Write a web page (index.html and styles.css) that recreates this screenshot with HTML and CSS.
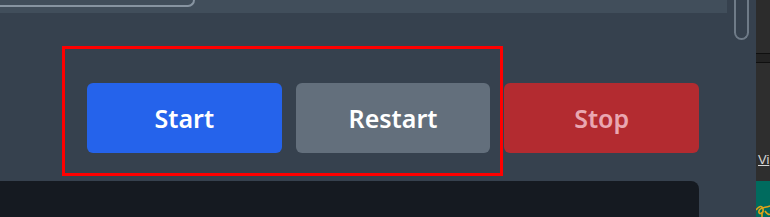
FILE: index.html
```html
<!DOCTYPE html>
<html lang="en">
<head>
    <meta charset="UTF-8">
    <meta name="viewport" content="width=device-width, initial-scale=1.0">
    <title>Controls</title>

    <link rel="stylesheet" href="styles.css">
</head>
<body>
    <div class="page">
        <div class="main">
            <div class="topbar">
                <div class="field"></div>
            </div>
            <div class="scroller"></div>

            <div class="controls">
                <button type="button" class="btn start">Start</button>
                <button type="button" class="btn restart">Restart</button>
                <button type="button" class="btn stop" disabled>Stop</button>
            </div>
            <!-- highlight round start / restart -->
            <div class="highlight"></div>

            <div class="console"></div>
        </div>

        <div class="side">
            <div class="side-top"></div>
            <div class="side-tabs"></div>
            <div class="side-body">
                <a href="#" class="side-link">Vi</a>
            </div>
            <div class="side-thumb">
                <svg width="14" height="36" viewBox="0 0 14 36">
                    <path d="M0 29 C3 25 6 24 7 28 C8 33 2 34 3 30 C4 26 9 27 14 25 M6 31 L6 36 M9 30 C11 33 13 34 14 33" fill="none" stroke="#e0a418" stroke-width="1.6"/>
                </svg>
            </div>
        </div>
    </div>
</body>
</html>
```

FILE: styles.css
```css
* {
    box-sizing: border-box;
}

body {
    margin: 0;
    background-color: #36414e;
    font-family: "Noto Sans", "Open Sans", sans-serif;
    overflow: hidden;
}

.page {
    display: flex;
    height: 217px;
}

.main {
    position: relative;
    width: 756px;
}

.topbar {
    width: 727px;
    height: 13px;
    background-color: #414e5b;
}

.topbar > .field {
    width: 195px;
    height: 7px;
    border-right: 2px solid #8794a1;
    border-bottom: 2px solid #8794a1;
    border-radius: 0 0 7px 0;
}

.scroller {
    position: absolute;
    left: 734px;
    top: -4px;
    width: 15px;
    height: 44px;
    border: 2px solid #6f7b88;
    border-top: none;
    border-radius: 0 0 8px 8px;
}

.controls {
    display: flex;
    gap: 14px;
    width: 612px;
    margin: 70px 0 0 87px;
}

.btn {
    flex: 1;
    height: 70px;
    border: none;
    border-radius: 6px;
    font-family: inherit;
    font-size: 25px;
    font-weight: 600;
    color: #fff;
}

.btn.start {
    background-color: #2563eb;
}

.btn.restart {
    background-color: #636f7c;
}

.btn.stop {
    background-color: #b32b30;
    color: #e9a7b1;
}

.highlight {
    position: absolute;
    left: 62px;
    top: 46px;
    width: 441px;
    height: 130px;
    border: 3px solid #ff0000;
}

.console {
    width: 699px;
    height: 40px;
    margin-top: 28px;
    background-color: #151a21;
    border-radius: 0 8px 0 0;
}

.side {
    flex: 1;
    display: flex;
    flex-direction: column;
    background-color: #2e2e2e;
}

.side-top {
    height: 53px;
    background-color: #2c2c2c;
}

.side-tabs {
    height: 10px;
    background-color: #232323;
    border-top: 1px solid #0f0f0f;
    border-bottom: 1px solid #0f0f0f;
}

.side-body {
    height: 118px;
    padding: 84px 0 0 2px;
}

.side-link {
    color: #d6d6d6;
    font-family: "Liberation Sans", sans-serif;
    font-size: 13px;
}

.side-thumb {
    flex: 1;
    background-color: #006b5e;
}

.side-thumb svg {
    display: block;
}
```
